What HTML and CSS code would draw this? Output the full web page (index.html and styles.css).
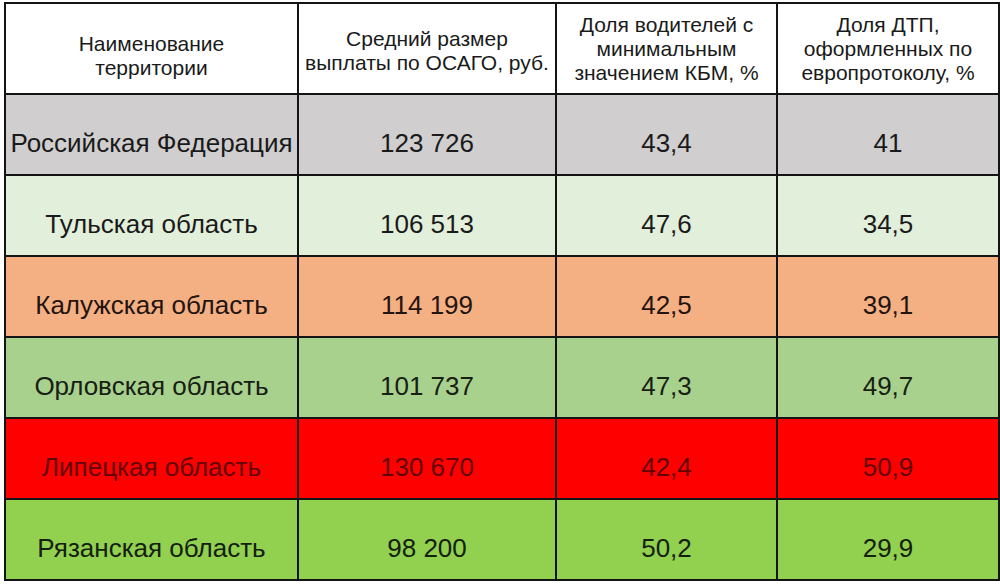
FILE: index.html
```html
<!DOCTYPE html>
<html lang="ru">
<head>
<meta charset="utf-8">
<link rel="stylesheet" href="styles.css">
</head>
<body>
<div class="wrap">
<table class="osago">
  <colgroup>
    <col class="c1"><col class="c2"><col class="c3"><col class="c4">
  </colgroup>
  <thead>
    <tr class="head">
      <th class="h1">Наименование<br>территории</th>
      <th class="h2">Средний размер<br>выплаты по ОСАГО, руб.</th>
      <th class="h3">Доля водителей с<br>минимальным<br>значением КБМ, %</th>
      <th class="h4">Доля ДТП,<br>оформленных по<br>европротоколу, %</th>
    </tr>
  </thead>
  <tbody>
    <tr class="r-gray"><td>Российская Федерация</td><td>123 726</td><td>43,4</td><td>41</td></tr>
    <tr class="r-pale"><td>Тульская область</td><td>106 513</td><td>47,6</td><td>34,5</td></tr>
    <tr class="r-orange"><td>Калужская область</td><td>114 199</td><td>42,5</td><td>39,1</td></tr>
    <tr class="r-green"><td>Орловская область</td><td>101 737</td><td>47,3</td><td>49,7</td></tr>
    <tr class="r-red"><td>Липецкая область</td><td>130 670</td><td>42,4</td><td>50,9</td></tr>
    <tr class="r-bright"><td>Рязанская область</td><td>98 200</td><td>50,2</td><td>29,9</td></tr>
  </tbody>
</table>
</div>
</body>
</html>
```
FILE: styles.css
```css
html, body {
  margin: 0;
  padding: 0;
  background: #ffffff;
}
.wrap {
  padding: 2px 0 0 4px;
}
.osago {
  border-collapse: collapse;
  table-layout: fixed;
  width: 994px;
  font-family: "Liberation Sans", Arial, sans-serif;
  color: #1a1a1a;
}
.c1 { width: 293px; }
.c2 { width: 258px; }
.c3 { width: 221px; }
.c4 { width: 222px; }
.osago th, .osago td {
  border: 2px solid #141414;
  text-align: center;
  vertical-align: middle;
  padding: 0;
}
.osago th {
  height: 91px;
  font-weight: normal;
  font-size: 21px;
  line-height: 24px;
  background: #ffffff;
  box-sizing: border-box;
}
.osago .h1 { padding-top: 14px; }
.osago .h2 { padding-top: 4px; }
.osago .h3 { padding-top: 0; }
.osago .h4 { padding-top: 0; }
.osago td {
  height: 81px;
  box-sizing: border-box;
  font-size: 26px;
  padding-top: 17px;
}
.r-gray td { background: #d0cecf; }
.r-pale td { background: #e2efda; }
.r-orange td { background: #f4b083; color: #241410; }
.r-green td { background: #a9d18e; color: #172013; }
.r-red td { background: #fe0000; color: #620404; }
.r-bright td { background: #92d050; color: #142010; }
```
